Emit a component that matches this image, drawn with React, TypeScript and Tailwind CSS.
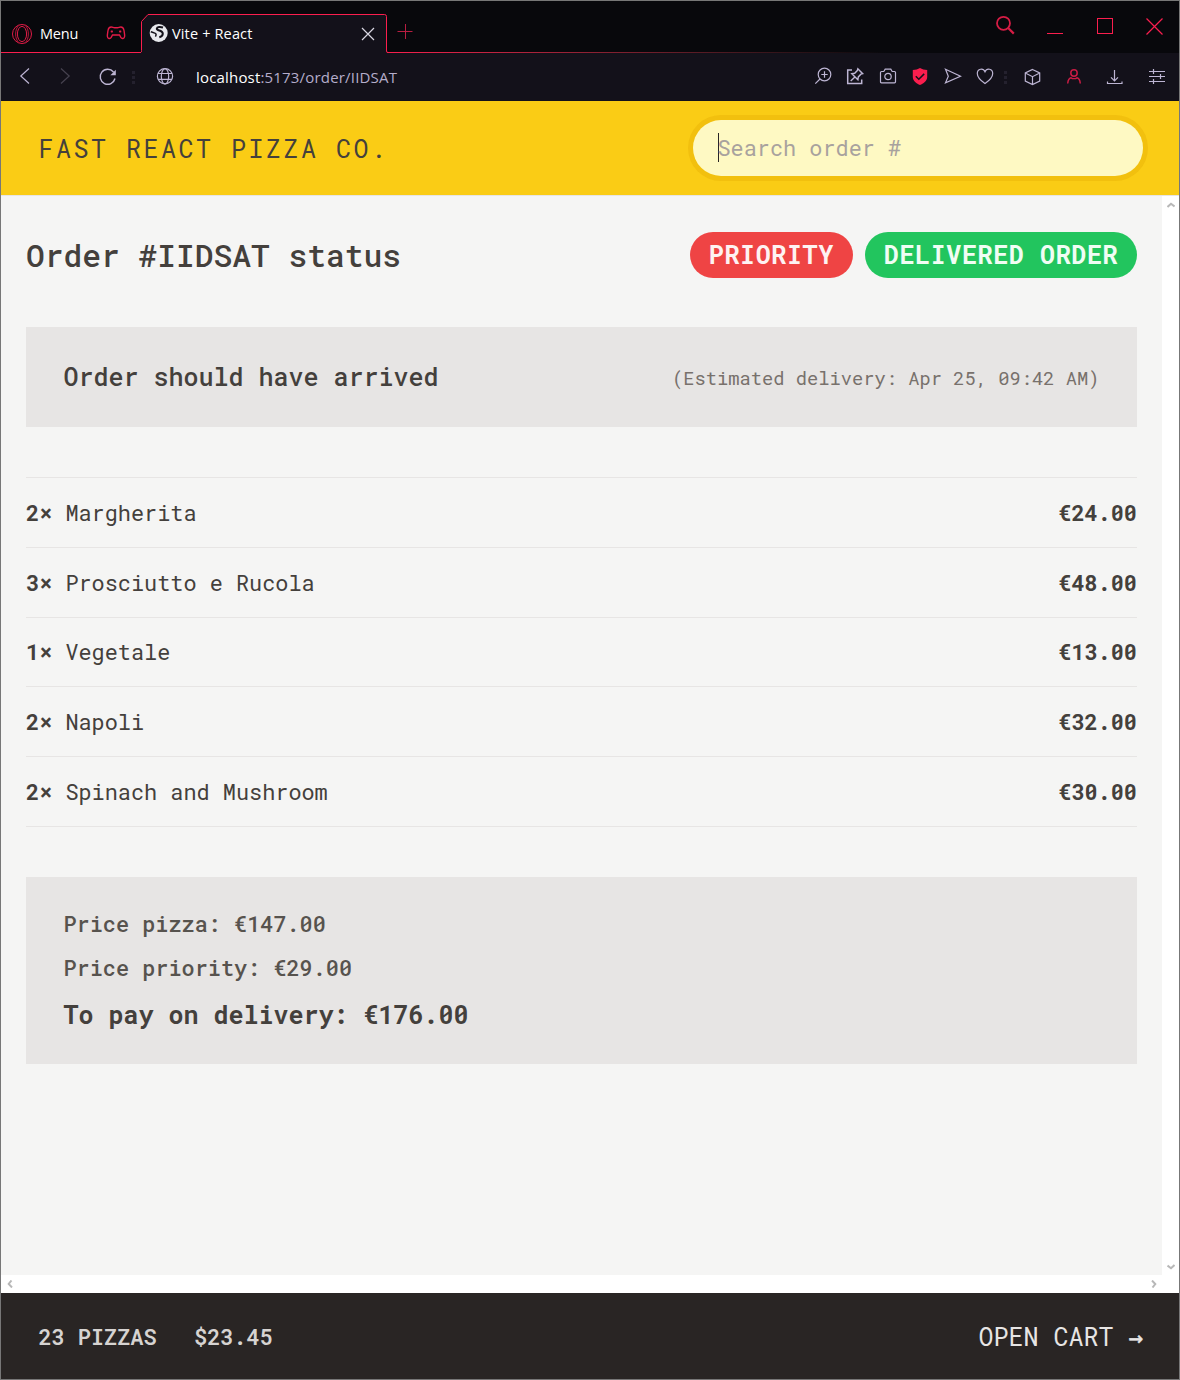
import React from "react";

const items = [
  { qty: 2, name: "Margherita", price: "€24.00" },
  { qty: 3, name: "Prosciutto e Rucola", price: "€48.00" },
  { qty: 1, name: "Vegetale", price: "€13.00" },
  { qty: 2, name: "Napoli", price: "€32.00" },
  { qty: 2, name: "Spinach and Mushroom", price: "€30.00" },
];

function Icon({ children, className = "" }: { children: React.ReactNode; className?: string }) {
  return (
    <svg
      viewBox="0 0 20 20"
      width="20"
      height="20"
      fill="none"
      stroke="currentColor"
      strokeWidth="1.2"
      className={`shrink-0 ${className}`}
    >
      {children}
    </svg>
  );
}

function Dots({ className = "" }: { className?: string }) {
  return (
    <div className={`flex w-[3px] shrink-0 flex-col gap-[2px] ${className}`}>
      <i className="h-[3px] bg-[#24212e]" />
      <i className="h-[3px] bg-[#24212e]" />
      <i className="h-[3px] bg-[#24212e]" />
    </div>
  );
}

function TitleBar() {
  return (
    <div className="relative flex h-[52px] shrink-0 bg-[#08080c] text-[#fa1e4e]">
      <div className="absolute bottom-0 left-[385px] h-px w-[500px] bg-gradient-to-r from-[#fa1e4e] to-[#08080c]" />
      <div className="flex w-[140px] items-start border-b border-[#fa1e4e] pl-[10px]">
        <svg width="22" height="22" viewBox="0 0 22 22" fill="none" stroke="currentColor" className="mt-[22px] opacity-90">
          <circle cx="11" cy="11" r="9.5" />
          <ellipse cx="11" cy="11" rx="4.6" ry="7.6" />
          <path d="M8 2.4C3.5 5.5 3.5 16.500 8 19.600M14 2.400c4.500 3.100 4.500 14.100 0 17.200" strokeWidth=".8" />
        </svg>
        <span className="mt-[23px] ml-[7px] w-[38px] text-[14.500px] leading-5 tracking-[-0.2px] text-white">Menu</span>
        <svg width="20" height="16" viewBox="0 0 20 16" fill="none" stroke="currentColor" strokeWidth="1.400" className="mt-[24px] ml-[28px] opacity-90">
          <path d="M5.200 2C3.200 2 2.400 3 2 5.500c-.3 2-.8 4-.6 6 .2 2.300 2.800 2.600 3.800.9L6.500 10h7l1.300 2.400c1 1.700 3.600 1.400 3.800-.9.200-2-.3-4-.6-6C17.600 3 16.800 2 14.800 2c-1.500 0-2 .8-3.300.8h-3C7.200 2.800 6.700 2 5.200 2Z" />
          <path d="M4.700 6.500h2.200M5.800 5.400v2.200M13.100 6.500h2.200M14.200 5.400v2.200" />
        </svg>
      </div>
      <div className="relative h-[52px] w-[246px]">
        <svg width="247" height="52" viewBox="0 0 247 52" className="absolute inset-0">
          <path d="M0 51.500 L.5 51 V20.500 L7 13.500 H243.500 Q245.500 13.500 245.500 15.500 V51 L246.500 52 H0Z" fill="#13111a" />
          <path d="M-.5 51.500 Q.5 51.500 .5 49.500 V20.500 L7 13.500 H243.500 Q245.500 13.500 245.500 15.500 V50 Q245.500 51.500 247 51.500" fill="none" stroke="#fa1e4e" />
        </svg>
        <div className="relative flex h-full items-start pl-[8px]">
          <svg width="20" height="20" viewBox="0 0 20 20" className="mt-[22px]">
            <circle cx="9.700" cy="10" r="9" fill="#e8e9ee" />
            <path d="M14 4.500c-2.500-1-6-.8-6.200 1-.1 1.500 2 1.700 3.400 2.200 1.500.6 2.600 1.300 2.600 3 0 1.900-1.500 3-3.500 3.500" stroke="#13111a" strokeWidth="2" fill="none" />
            <path d="M1.800 8.800c2 .9 4.700.8 5.200 2.300.3 1-.4 1.700-.3 2.600" stroke="#13111a" strokeWidth="1.500" fill="none" />
          </svg>
          <span className="mt-[23px] ml-[3px] w-[101px] text-[14.500px] leading-5 tracking-[0.150px] text-white">Vite + React</span>
          <svg width="14" height="14" viewBox="0 0 14 14" stroke="#d9d7e2" strokeWidth="1.2" className="mt-[26px] ml-[88px]">
            <path d="M1 1 13 13M13 1 1 13" />
          </svg>
        </div>
      </div>
      <svg width="16" height="16" viewBox="0 0 16 16" stroke="#b81d41" className="mt-[23px] ml-[10px]">
        <path d="M.5 7.500h15M8.500 0v15" />
      </svg>
      <div className="ml-auto flex pr-[16px]">
        <svg width="20" height="20" viewBox="0 0 20 20" fill="none" stroke="#d61c45" strokeWidth="1.800" className="mt-[14px]">
          <circle cx="8.500" cy="8.300" r="6.500" />
          <path d="M13.200 13 18.800 18.600" strokeWidth="2.200" />
        </svg>
        <div className="mt-[32px] ml-[32px] h-px w-4 bg-[#fa1e4e]" />
        <div className="mt-[17px] ml-[34px] size-4 border border-[#fa1e4e]" />
        <svg width="17" height="17" viewBox="0 0 17 17" stroke="#fa1e4e" strokeWidth="1.200" className="mt-[17px] ml-[33px]">
          <path d="M.5.500 16.500 16.500M16.500.500.500 16.500" />
        </svg>
      </div>
    </div>
  );
}

function Toolbar() {
  return (
    <div className="flex h-12 shrink-0 items-center bg-[#13111a] pl-[14px] text-[#bdb5d3]">
      <Icon><path d="M14 1.500 5.800 9l8.200 7.500" /></Icon>
      <Icon className="ml-[20px] text-[#46424f]"><path d="M6 1.500 14.200 9 6 16.500" /></Icon>
      <Icon className="ml-[23px]">
        <path d="M15.500 5A7.500 7.500 0 1 0 17 11.500" strokeWidth="1.400" />
        <path d="M17.800 2.800v5.400h-5.400Z" fill="currentColor" stroke="none" />
      </Icon>
      <Dots className="ml-[14px]" />
      <Icon className="ml-[20px]">
        <circle cx="10" cy="9.300" r="7.600" />
        <ellipse cx="10" cy="9.300" rx="3.700" ry="7.600" />
        <path d="M3 6.500h14M3 12.300h14" />
      </Icon>
      <span className="-mt-px ml-[21px] text-[15px] leading-5 tracking-[0.180px] text-[#b5adcb]">
        <span className="text-white">localhost</span>:5173/order/IIDSAT
      </span>
      <div className="ml-auto flex items-center pr-[12px]">
        <Icon>
          <circle cx="11.500" cy="7.500" r="6.300" />
          <path d="M11.500 4.300v6.400M8.300 7.500h6.400M7 12 2.300 16.700" />
        </Icon>
        <Icon className="ml-[12px]">
          <path d="M7 3H2.700v13.500h14v-4" strokeWidth="1.500" />
          <path d="M12.800 1.800 17.700 6.700l-1.800.5-2.600 2.700-.4 2.900-6.100-6.100 2.900-.4 2.600-2.700ZM9.900 9.900l-4.200 4.200" strokeWidth="1.400" />
        </Icon>
        <Icon className="ml-[13px]">
          <path d="M3.500 4.500h2.300l1.400-2.300h5.600l1.400 2.300h2.300q1 0 1 1v9.300q0 1-1 1h-13q-1 0-1-1V5.500q0-1 1-1Z" />
          <circle cx="10" cy="9.500" r="3.200" />
        </Icon>
        <Icon className="ml-[12px]">
          <path d="M10 1C12 2.300 14.500 3 17.200 3v7c0 4-4 6.700-7.200 8-3.200-1.300-7.200-4-7.200-8V3C5.500 3 8 2.300 10 1Z" fill="#fa1e4e" stroke="none" />
          <path d="m5.800 9.300 3 3 5.400-5.400" stroke="#13111a" strokeWidth="1.500" />
        </Icon>
        <Icon className="ml-[13px]"><path d="M2.500 2.300 17.500 9.200l-15 6.600L5.300 9.200Z" /></Icon>
        <Icon className="ml-[12px]">
          <path d="M10 16.600C7.500 14.800 2.300 11.300 2.300 6.500c0-5 6-5.700 7.700-1.700 1.700-4 7.700-3.300 7.700 1.700 0 4.800-5.200 8.300-7.700 10.100Z" />
        </Icon>
        <Dots className="ml-[9px]" />
        <Icon className="ml-[16px]">
          <path d="M9.500 2.500 16.700 6v8L9.500 17.500 2.300 14V6ZM2.300 6 9.500 9.700 16.700 6M9.500 9.700v8" />
        </Icon>
        <Icon className="ml-[21px] text-[#c91c44]">
          <circle cx="10" cy="6" r="3.200" strokeWidth="1.500" />
          <path d="M3.700 16.500c.3-3 1-5.200 3.300-5.700 1.500 1 4.500 1 6 0 2.300.5 3 2.700 3.300 5.700" strokeWidth="1.500" />
        </Icon>
        <Icon className="ml-[21px]">
          <path d="M9.500 3v10.500M6 10.300l3.500 3.500L13 10.300M2.500 14.500v2h14.500v-2" />
        </Icon>
        <Icon className="ml-[22px]">
          <path d="M2 4.500h16M2 9.500h16M2 14.500h16M6.500 2v5M13.500 7v5M6.500 12v5" />
        </Icon>
      </div>
    </div>
  );
}

function Header() {
  return (
    <header className="flex h-[95px] shrink-0 items-center justify-between border-b border-[#e7e5e4] bg-[#facc15] pr-9 pl-[37.500px]">
      <a className="text-[25px] leading-[37px] tracking-[0.1em]">FAST REACT PIZZA CO.</a>
      <div className="flex h-14 w-[450px] items-center rounded-full bg-[#fef9c3] pl-[25px] ring-[5px] ring-[#eab308]/50">
        <div className="-mt-[2px] h-[29px] w-px bg-[#292524]" />
        <span className="-ml-[1.500px] text-[21.875px] leading-7 text-[#a8a29e]">Search order #</span>
      </div>
    </header>
  );
}

function Chevron({ className }: { className: string }) {
  return (
    <svg width="8" height="8" viewBox="0 0 8 8" fill="none" stroke="#b8b8b8" strokeWidth="2" className={className}>
      <path d="M.5 6 4 2.700l3.500 2.800" />
    </svg>
  );
}

function Main() {
  return (
    <div className="grid h-[1097px] shrink-0 grid-cols-[1161px_17px] grid-rows-[1079px_18px] bg-white">
      <main className="bg-[#f5f5f4] px-[25px] pt-[36px]">
        <div className="flex h-[46px] items-center justify-between">
          <h2 className="text-[31.250px] font-medium">Order #IIDSAT status</h2>
          <div className="flex gap-[12.500px] text-[25px] leading-[46px] font-bold tracking-[0.025em]">
            <span className="rounded-full bg-[#ef4444] px-[18.750px] text-[#fef2f2]">PRIORITY</span>
            <span className="rounded-full bg-[#22c55e] px-[18.750px] text-[#f0fdf4]">DELIVERED ORDER</span>
          </div>
        </div>
        <div className="mt-[49px] flex h-[100px] items-center justify-between bg-[#e7e5e4] px-[37.500px]">
          <p className="text-[25px] font-medium">Order should have arrived</p>
          <p className="pt-[2px] text-[18.750px] text-[#78716c]">(Estimated delivery: Apr 25, 09:42 AM)</p>
        </div>
        <ul className="mt-[50px] border-y border-[#e7e5e4] text-[21.875px]">
          {items.map((item) => (
            <li key={item.name} className="flex h-[69.750px] items-center justify-between border-t border-[#e7e5e4] pt-[2px] first:h-[68.750px] first:border-t-0">
              <p><span className="font-bold">{item.qty}×</span> {item.name}</p>
              <p className="font-bold">{item.price}</p>
            </li>
          ))}
        </ul>
        <div className="mt-[50px] flex h-[187px] flex-col bg-[#e7e5e4] px-[37.500px] pt-[31px]">
          <p className="text-[21.875px] leading-[31.250px] font-medium text-[#57534e]">Price pizza: €147.00</p>
          <p className="mt-[12.500px] text-[21.875px] leading-[31.250px] font-medium text-[#57534e]">Price priority: €29.00</p>
          <p className="mt-[13.500px] text-[25px] leading-[37.500px] font-bold">To pay on delivery: €176.00</p>
        </div>
      </main>
      <div className="flex flex-col items-center justify-between pt-[5px] pb-[4px]">
        <Chevron className="" />
        <Chevron className="rotate-180" />
      </div>
      <div className="flex items-center justify-between pr-[4px] pl-[5px]">
        <Chevron className="-rotate-90" />
        <Chevron className="rotate-90" />
      </div>
      <div />
    </div>
  );
}

export default function App() {
  return (
    <div className="flex h-[1380px] w-[1180px] flex-col overflow-hidden border border-[#777777] bg-[#292524] font-['Open_Sans',sans-serif]">
      <TitleBar />
      <Toolbar />
      <div className="flex flex-1 flex-col font-['Roboto_Mono','DejaVu_Sans_Mono',monospace] text-[#44403c]">
        <Header />
        <Main />
        <footer className="flex flex-1 items-center justify-between bg-[#292524] pt-[2px] pr-[36px] pl-[37.500px]">
          <p className="flex gap-[37.500px] text-[21.875px] font-semibold text-[#d6d3d1]">
            <span>23 PIZZAS</span>
            <span>$23.45</span>
          </p>
          <a className="text-[25px] text-[#e7e5e4]">
            OPEN CART <span className="text-[24px] [-webkit-text-stroke:0.500px_currentColor]">→</span>
          </a>
        </footer>
      </div>
    </div>
  );
}
